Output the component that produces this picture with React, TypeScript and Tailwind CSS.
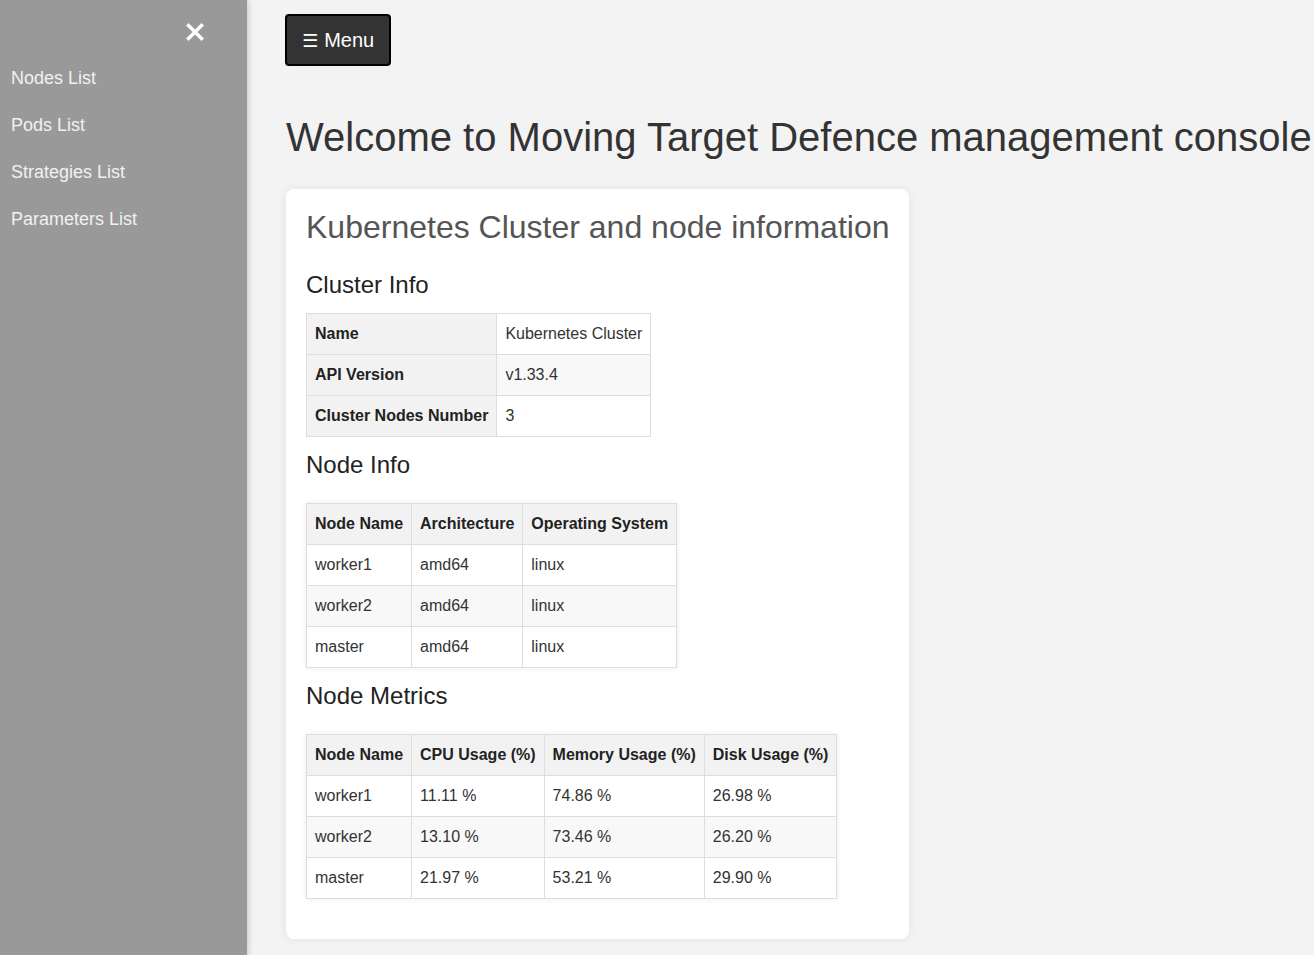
import React from 'react';

const navItems = ['Nodes List', 'Pods List', 'Strategies List', 'Parameters List'];

const clusterRows: [string, string][] = [
  ['Name', 'Kubernetes Cluster'],
  ['API Version', 'v1.33.4'],
  ['Cluster Nodes Number', '3'],
];

const nodeInfo = [
  ['worker1', 'amd64', 'linux'],
  ['worker2', 'amd64', 'linux'],
  ['master', 'amd64', 'linux'],
];

const nodeMetrics = [
  ['worker1', '11.11 %', '74.86 %', '26.98 %'],
  ['worker2', '13.10 %', '73.46 %', '26.20 %'],
  ['master', '21.97 %', '53.21 %', '29.90 %'],
];

const cell = 'border border-[#ddd] px-2 py-[11px] leading-[18px] text-left whitespace-nowrap';

const DataTable: React.FC<{ head: string[]; rows: string[][] }> = ({ head, rows }) => (
  <table className="border-collapse text-[16px] shadow-[0_0_6px_rgba(0,0,0,0.08)]">
    <thead>
      <tr className="bg-[#f2f2f2]">
        {head.map(h => (
          <th key={h} className={`${cell} font-bold text-[#222]`}>{h}</th>
        ))}
      </tr>
    </thead>
    <tbody>
      {rows.map((r, i) => (
        <tr key={i} className={i % 2 === 1 ? 'bg-[#f8f8f8]' : 'bg-white'}>
          {r.map((c, j) => (
            <td key={j} className={`${cell} text-[#333]`}>{c}</td>
          ))}
        </tr>
      ))}
    </tbody>
  </table>
);

const App: React.FC = () => {
  return (
    <div className="flex min-h-[955px] bg-[#f3f3f3] font-['Liberation_Sans',Arial,sans-serif]">
      <aside className="w-[247px] shrink-0 bg-[#999] shadow-[2px_0_5px_rgba(0,0,0,0.15)] z-10">
        <div className="h-[63px] pl-[186px] pt-[23px]">
          <svg width="18" height="18" viewBox="0 0 18 18" className="block">
            <path d="M2.5 2.5 L15.5 15.5 M15.5 2.5 L2.5 15.5" stroke="#fff" strokeWidth="3.4" strokeLinecap="square" />
          </svg>
        </div>
        <nav className="flex flex-col">
          {navItems.map(item => (
            <a key={item} href="#" className="block h-[47px] leading-[30px] pl-[11px] text-[18px] text-[#f1f1f1]">
              {item}
            </a>
          ))}
        </nav>
      </aside>

      <main className="flex-1 pl-[38px] pt-[14px] pb-4 overflow-hidden">
        <button className="h-[52px] px-[15px] rounded-[4px] bg-[#333] border-2 border-black text-white text-[20px] flex items-center gap-[6px]">
          <span className="font-['DejaVu_Sans',sans-serif] text-[18px]">☰</span>
          <span>Menu</span>
        </button>

        <h1 className="mt-[48px] ml-[1px] text-[40px] leading-[46px] text-[#333] whitespace-nowrap">
          Welcome to Moving Target Defence management console
        </h1>

        <section className="mt-[29px] ml-[1px] w-[623px] bg-white rounded-[8px] shadow-[0_0_10px_rgba(0,0,0,0.07)] px-5 pt-5 pb-[40px]">
          <h2 className="text-[32px] leading-[37px] text-[#555] whitespace-nowrap">
            Kubernetes Cluster and node information
          </h2>

          <h3 className="mt-[25px] text-[24px] leading-[28px] text-[#222]">Cluster Info</h3>
          <table className="mt-[14px] border-collapse text-[16px]">
            <tbody>
              {clusterRows.map(([k, v], i) => (
                <tr key={k}>
                  <th className={`${cell} bg-[#f2f2f2] font-bold text-[#222]`}>{k}</th>
                  <td className={`${cell} text-[#333] ${i === 1 ? 'bg-[#f8f8f8]' : 'bg-white'}`}>{v}</td>
                </tr>
              ))}
            </tbody>
          </table>

          <h3 className="mt-[14px] text-[24px] leading-[28px] text-[#222]">Node Info</h3>
          <div className="mt-[24px]">
            <DataTable head={['Node Name', 'Architecture', 'Operating System']} rows={nodeInfo} />
          </div>

          <h3 className="mt-[14px] text-[24px] leading-[28px] text-[#222]">Node Metrics</h3>
          <div className="mt-[24px]">
            <DataTable
              head={['Node Name', 'CPU Usage (%)', 'Memory Usage (%)', 'Disk Usage (%)']}
              rows={nodeMetrics}
            />
          </div>
        </section>
      </main>
    </div>
  );
};

export default App;
